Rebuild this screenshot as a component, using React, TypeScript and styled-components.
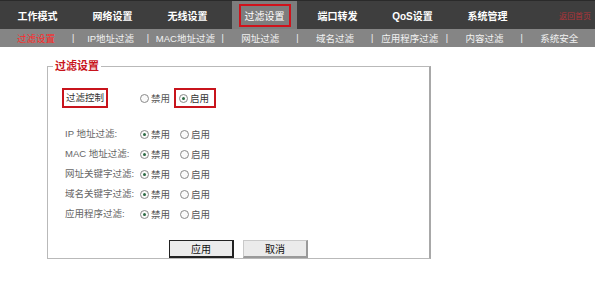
import React from "react";
import styled, { createGlobalStyle } from "styled-components";

const Global = createGlobalStyle`
  html, body { margin: 0; padding: 0; background: #fff; }
  body { font-family: "Liberation Sans", "Noto Sans CJK SC", sans-serif; }
  * { box-sizing: border-box; }
`;

const TopBar = styled.div`
  height: 29px;
  background: #3e3e3e;
  border-top: 1px solid #2a2a2a;
  display: flex;
  align-items: stretch;
`;

const NavItem = styled.div<{ $active?: boolean }>`
  display: flex;
  align-items: center;
  justify-content: center;
  font-size: 10px;
  font-weight: bold;
  color: #fff;
  white-space: nowrap;
  margin: ${(p) => (p.$active ? "0 3px 0 7px" : "0")};
  width: ${(p) => (p.$active ? "65px" : "75px")};
  background: ${(p) => (p.$active ? "#7d7d7d" : "transparent")};
`;

const ActiveLabel = styled.span`
  border: 2px solid #d0121b;
  padding: 2px 4px;
  color: #fff;
  font-weight: normal;
  font-size: 10px;
`;

const Logout = styled.div`
  margin-left: auto;
  margin-right: 4px;
  align-self: center;
  font-size: 8px;
  color: #b0343a;
`;

const SubBar = styled.div`
  height: 18px;
  background: #858585;
  display: flex;
  align-items: center;
`;

const SubItem = styled.div<{ $active?: boolean }>`
  width: 72px;
  text-align: center;
  font-size: 9.5px;
  white-space: nowrap;
  color: ${(p) => (p.$active ? "#ff2a2a" : "#f2f2f2")};
`;

const Sep = styled.div`
  width: 3px;
  text-align: center;
  font-size: 9px;
  color: #f2f2f2;
`;

const Main = styled.div`
  padding-top: 12px;
`;

const Box = styled.fieldset`
  margin: 0 0 0 47px;
  width: 384px;
  border: 1px solid #b9b9b9;
  border-right: 2px solid #a8a8a8;
  padding: 14px 0 0 14px;
`;

const Legend = styled.legend`
  font-size: 11px;
  font-weight: bold;
  color: #c8141c;
  padding: 0 2px;
  margin-left: -9px;
  line-height: 15px;
`;

const Grid = styled.div`
  display: grid;
  grid-template-columns: 76px auto;
  align-items: center;
`;

const Row = styled.div`
  display: contents;
`;

const Label = styled.div<{ $boxed?: boolean; $top?: number }>`
  font-size: 9.5px;
  white-space: nowrap;
  color: ${(p) => (p.$boxed ? "#333" : "#666")};
  height: ${(p) => (p.$boxed ? "20px" : "19.4px")};
  line-height: ${(p) => (p.$boxed ? "16px" : "19.4px")};
  padding: ${(p) => (p.$boxed ? "0 2px" : "0 0 0 3px")};
  margin-top: ${(p) => p.$top ?? 0}px;
  justify-self: start;
  border: ${(p) => (p.$boxed ? "2px solid #c8141c" : "none")};
`;

const Options = styled.div<{ $top?: number }>`
  display: flex;
  align-items: center;
  margin-top: ${(p) => p.$top ?? 0}px;
`;

const Option = styled.label<{ $boxed?: boolean; $w?: number }>`
  display: flex;
  align-items: center;
  height: 20px;
  white-space: nowrap;
  font-size: 9.5px;
  color: ${(p) => (p.$boxed ? "#333" : "#555")};
  border: 2px solid ${(p) => (p.$boxed ? "#c8141c" : "transparent")};
  padding: 0 5px 0 ${(p) => (p.$boxed ? "3px" : "0")};
  width: ${(p) => (p.$w ? `${p.$w}px` : "auto")};
  margin-left: ${(p) => (p.$boxed ? "-2px" : "0")};
`;

const Dot = styled.span<{ $on?: boolean }>`
  width: 9px;
  height: 9px;
  border-radius: 50%;
  border: 1px solid #8a8a8a;
  background: #fafafa;
  margin-right: 2px;
  display: inline-flex;
  align-items: center;
  justify-content: center;
  flex: none;
  &::after {
    content: "";
    width: 3px;
    height: 3px;
    border-radius: 50%;
    background: ${(p) => (p.$on ? "#2d6b44" : "transparent")};
  }
`;

const Buttons = styled.div`
  display: flex;
  justify-content: center;
  gap: 9px;
  margin-top: 16px;
  padding-right: 14px;
`;

const Btn = styled.button<{ $primary?: boolean }>`
  width: 65px;
  height: 18px;
  font-family: inherit;
  font-size: 10px;
  color: #111;
  background: #ebebeb;
  border: 1px solid ${(p) => (p.$primary ? "#222" : "#c9c9c9")};
  border-right: 2px solid ${(p) => (p.$primary ? "#222" : "#9a9a9a")};
  border-bottom: 2px solid ${(p) => (p.$primary ? "#222" : "#9a9a9a")};
  padding: 0;
`;

const rows = [
  "IP 地址过滤:",
  "MAC 地址过滤:",
  "网址关键字过滤:",
  "域名关键字过滤:",
  "应用程序过滤:",
];

const top = ["工作模式", "网络设置", "无线设置", "过滤设置", "端口转发", "QoS设置", "系统管理"];
const sub = ["过滤设置", "IP地址过滤", "MAC地址过滤", "网址过滤", "域名过滤", "应用程序过滤", "内容过滤", "系统安全"];

export default function App() {
  return (
    <>
      <Global />
      <TopBar>
        {top.map((t, i) =>
          i === 3 ? (
            <NavItem key={t} $active>
              <ActiveLabel>{t}</ActiveLabel>
            </NavItem>
          ) : (
            <NavItem key={t}>{t}</NavItem>
          )
        )}
        <Logout>返回首页</Logout>
      </TopBar>
      <SubBar>
        {sub.map((t, i) => (
          <React.Fragment key={t}>
            {i > 0 && <Sep>|</Sep>}
            <SubItem $active={i === 0}>{t}</SubItem>
          </React.Fragment>
        ))}
      </SubBar>
      <Main>
        <Box>
          <Legend>过滤设置</Legend>
          <Grid>
            <Row>
              <Label $boxed>过滤控制</Label>
              <Options>
                <Option $w={38}>
                  <Dot />
                  禁用
                </Option>
                <Option $boxed>
                  <Dot $on />
                  启用
                </Option>
              </Options>
            </Row>
            {rows.map((r, i) => (
              <Row key={r}>
                <Label $top={i === 0 ? 16 : 0}>{r}</Label>
                <Options $top={i === 0 ? 16 : 0}>
                  <Option $w={40}>
                    <Dot $on />
                    禁用
                  </Option>
                  <Option>
                    <Dot />
                    启用
                  </Option>
                </Options>
              </Row>
            ))}
          </Grid>
          <Buttons>
            <Btn $primary>应用</Btn>
            <Btn>取消</Btn>
          </Buttons>
        </Box>
      </Main>
    </>
  );
}
